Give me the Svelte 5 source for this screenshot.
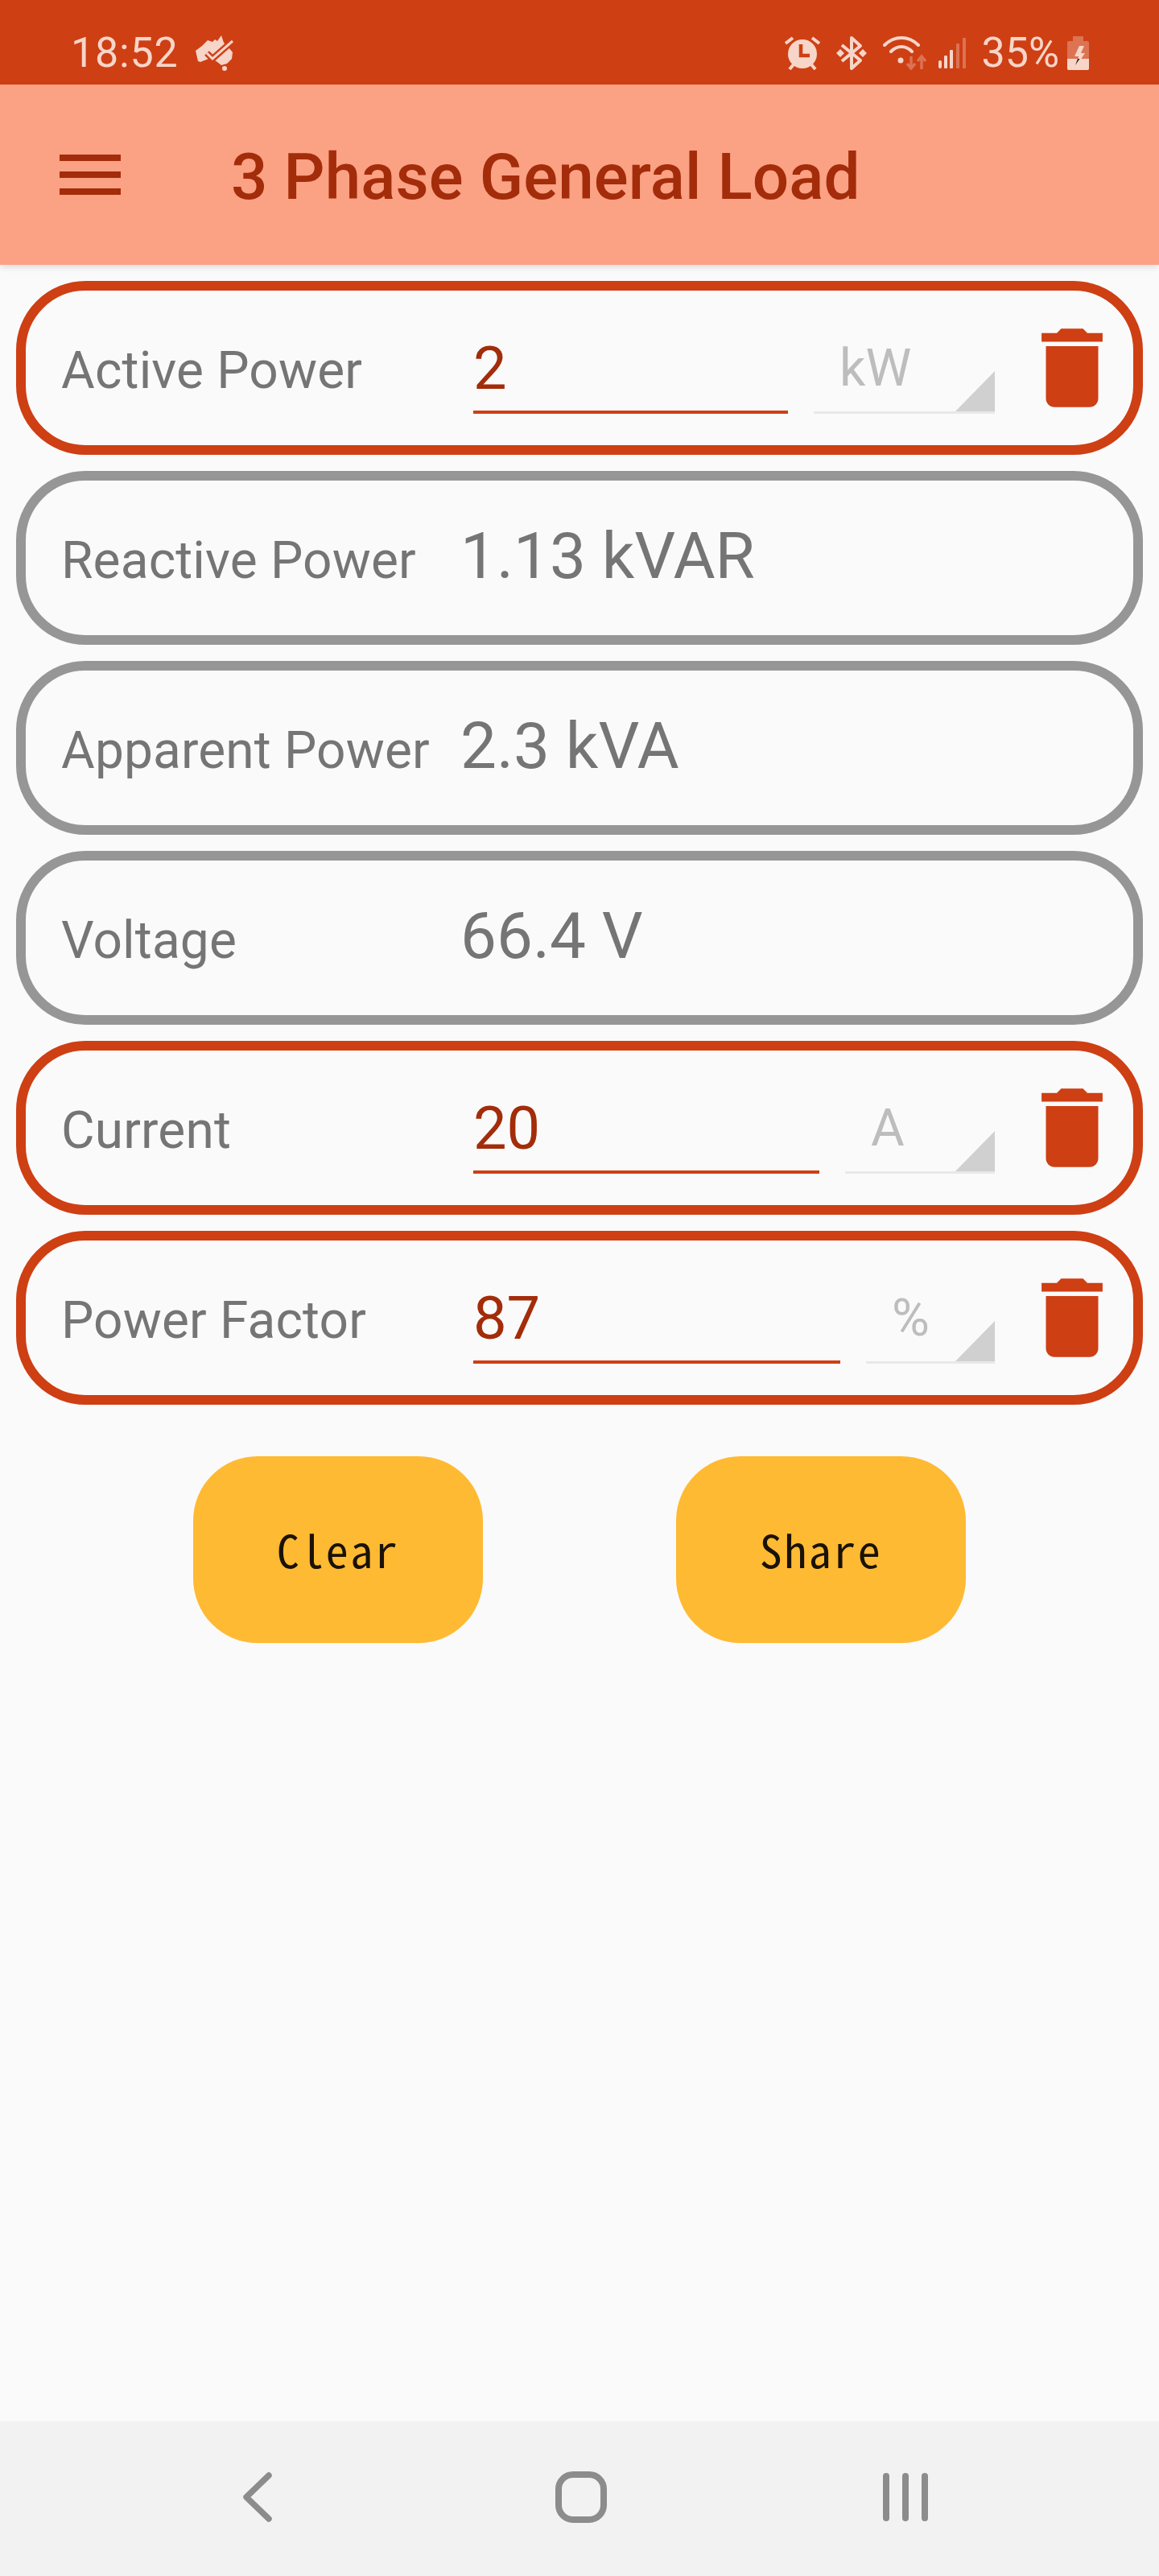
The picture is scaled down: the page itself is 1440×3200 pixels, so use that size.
<script lang="ts">
  type Row =
    | { label: string; output: string }
    | { label: string; value: string; unit: string; unit_width: number };

  const rows: Row[] = [
    { label: "Active Power", value: "2", unit: "kW", unit_width: 225 },
    { label: "Reactive Power", output: "1.13 kVAR" },
    { label: "Apparent Power", output: "2.3 kVA" },
    { label: "Voltage", output: "66.4 V" },
    { label: "Current", value: "20", unit: "A", unit_width: 186 },
    { label: "Power Factor", value: "87", unit: "%", unit_width: 160 },
  ];
</script>

<div class="Screen">
  <div class="StatusBar">
    <span class="StatusBar__time">18:52</span>
    <svg class="StatusBar__aus" width="49" height="44" viewBox="0 0 49 44">
      <path d="M1 19 L9 13 L16 6 L22 8 L25 5 L28 7 L33 0 L36 9 L42 15 L47 21 L46 29 L40 35 L33 37 L28 33 L20 28 L7 33 L4 32 Z" fill="currentColor" />
      <circle cx="37" cy="41" r="3" fill="currentColor" />
      <path d="M15 22 L22 29 L47 7" fill="none" stroke="#ce3f14" stroke-width="8" />
      <path d="M15 22 L22 29 L47 7" fill="none" stroke="currentColor" stroke-width="3" />
    </svg>
    <span class="StatusBar__spacer"></span>
    <svg class="StatusBar__alarm" width="44" height="42" viewBox="0 0 44 42">
      <circle cx="22" cy="22" r="18" fill="currentColor" />
      <path d="M1 9 L10 2 M43 9 L34 2 M6 41 L11 35 M38 41 L33 35" stroke="currentColor" stroke-width="4" fill="none" />
      <path d="M20 10 V24 H31" stroke="#ce3f14" stroke-width="4.5" fill="none" />
    </svg>
    <svg class="StatusBar__bt" width="38" height="44" viewBox="0 0 38 44">
      <path d="M7 12 L30 31 L19 41 V3 L30 13 L7 32" fill="none" stroke="currentColor" stroke-width="4" stroke-linejoin="round" />
      <path d="M0 22 L5 17 L10 22 L5 27 Z M28 22 L33 17 L38 22 L33 27 Z" fill="currentColor" />
    </svg>
    <svg class="StatusBar__wifi" width="54" height="42" viewBox="0 0 54 42">
      <path d="M2 11 C14 -1 32 -1 44 11 M10 19 C18 11 28 11 36 19" fill="none" stroke="currentColor" stroke-width="4" stroke-linecap="round" />
      <circle cx="22" cy="30" r="3.5" fill="currentColor" />
      <path d="M35 25 V39 M30 34 L35 40 L40 34 M48 41 V26 M43 31 L48 25 L53 31" fill="none" stroke="currentColor" stroke-width="3.5" opacity="0.35" />
    </svg>
    <svg class="StatusBar__signal" width="36" height="38" viewBox="0 0 36 38">
      <rect x="1" y="28" width="4" height="10" rx="2" fill="currentColor" />
      <rect x="8" y="22" width="4" height="16" rx="1" fill="currentColor" />
      <rect x="15" y="15" width="4" height="23" rx="1" fill="currentColor" />
      <rect x="23" y="7" width="4" height="31" rx="1" fill="currentColor" opacity="0.35" />
      <rect x="31" y="0" width="4" height="38" rx="1" fill="currentColor" opacity="0.35" />
    </svg>
    <span class="StatusBar__percent">35%</span>
    <svg class="StatusBar__battery" width="27" height="42" viewBox="0 0 27 42">
      <path d="M7 0 H20 V6 H25 Q27 6 27 8 V40 Q27 42 25 42 H2 Q0 42 0 40 V8 Q0 6 2 6 H7 Z" fill="currentColor" opacity="0.35" />
      <path d="M0 28 H27 V40 Q27 42 25 42 H2 Q0 42 0 40 Z" fill="currentColor" />
      <path d="M15 12 H21 L17 21 H22 L12 36 L14 25 H9 Z" fill="currentColor" />
      <path d="M10 36 L13 28 H15.5 Z" fill="#2a1a14" />
    </svg>
  </div>

  <header class="AppBar">
    <svg class="AppBar__menu" width="76" height="50" viewBox="0 0 76 50" aria-label="Menu">
      <rect width="76" height="8" />
      <rect y="21" width="76" height="8" />
      <rect y="42" width="76" height="8" />
    </svg>
    <h1 class="AppBar__title">3 Phase General Load</h1>
  </header>

  <main class="Content">
    {#each rows as row}
      {#if "output" in row}
        <div class="Row Row--output">
          <span class="Row__label">{row.label}</span>
          <span class="Row__output">{row.output}</span>
        </div>
      {:else}
        <div class="Row">
          <span class="Row__label">{row.label}</span>
          <span class="Row__input">{row.value}</span>
          <span class="Row__unit" style="width: {row.unit_width}px">
            {row.unit}
            <span class="Row__caret"></span>
          </span>
          <svg class="Row__trash" width="130" height="130" viewBox="0 0 24 24" aria-label="Delete">
            <path d="M6 19c0 1.1.9 2 2 2h8c1.1 0 2-.9 2-2V7H6v12zM19 4h-3.5l-1-1h-5l-1 1H5v2h14V4z" />
          </svg>
        </div>
      {/if}
    {/each}

    <div class="Actions">
      <button type="button" class="Actions__button">Clear</button>
      <button type="button" class="Actions__button">Share</button>
    </div>
  </main>

  <nav class="NavBar">
    <svg class="NavBar__back" width="38" height="62" viewBox="0 0 38 62">
      <path d="M33 4 L5 31 L33 58" fill="none" stroke="#8c8c8c" stroke-width="7.5" stroke-linecap="round" stroke-linejoin="round" />
    </svg>
    <span class="NavBar__home"></span>
    <span class="NavBar__recents">
      <span></span>
      <span></span>
      <span></span>
    </span>
  </nav>
</div>

<style>
  :global(body) {
    margin: 0;
    background-color: #fafafa;
  }

  .Screen {
    display: flex;
    flex-direction: column;
    height: 3200px;
    background-color: #fafafa;
    font-family: Roboto, sans-serif;
  }

  .StatusBar {
    display: flex;
    align-items: center;
    flex: none;
    box-sizing: border-box;
    height: 105px;
    padding: 26px 87px 0 88px;
    background-color: #ce3f14;
    color: #f7d5c9;
  }

  .StatusBar__time {
    font-size: 52px;
    line-height: 80px;
    letter-spacing: 0.8px;
  }

  .StatusBar__aus {
    margin-left: 20px;
  }

  .StatusBar__spacer {
    flex: 1;
  }

  .StatusBar__bt {
    margin-left: 20px;
  }

  .StatusBar__wifi {
    margin-left: 20px;
  }

  .StatusBar__signal {
    margin-left: 14px;
  }

  .StatusBar__percent {
    margin-left: 18px;
    font-size: 52px;
    line-height: 80px;
  }

  .StatusBar__battery {
    margin-left: 10px;
  }

  .AppBar {
    display: flex;
    align-items: center;
    flex: none;
    box-sizing: border-box;
    height: 224px;
    padding-left: 74px;
    background-color: #fba184;
    box-shadow: 0 3px 8px rgba(0, 0, 0, 0.12);
    z-index: 1;
  }

  .AppBar__menu {
    fill: #a32c0a;
  }

  .AppBar__title {
    margin: 6px 0 0 137px;
    color: #a32c0a;
    font-size: 80px;
    font-weight: 500;
    line-height: 1;
    letter-spacing: 0.1px;
  }

  .Content {
    display: flex;
    flex: 1;
    flex-direction: column;
    gap: 20px;
    padding: 20px 20px 0;
  }

  .Row {
    display: flex;
    align-items: center;
    box-sizing: border-box;
    height: 216px;
    padding: 0 11px 0 44px;
    border: 12px solid #ce3f14;
    border-radius: 86px;
  }

  .Row--output {
    border-color: #969696;
  }

  .Row__label {
    flex: none;
    width: 512px;
    padding-top: 6px;
    color: #757575;
    font-size: 64px;
    letter-spacing: 0.15px;
    white-space: nowrap;
  }

  .Row--output .Row__label {
    width: 496px;
  }

  .Row__input {
    flex: 1;
    box-sizing: border-box;
    height: 114px;
    border-bottom: 4px solid #ce3f14;
    color: #a32c0a;
    font-size: 74px;
    line-height: 116px;
  }

  .Row__output {
    margin-top: -4px;
    color: #757575;
    font-size: 80px;
  }

  .Row__unit {
    position: relative;
    flex: none;
    box-sizing: border-box;
    height: 114px;
    margin-left: 32px;
    padding: 16px 0 0 32px;
    border-bottom: 3px solid #e8e8e8;
    color: #bdbdbd;
    font-size: 64px;
    line-height: 84px;
  }

  .Row__caret {
    position: absolute;
    right: 0;
    bottom: 0;
    width: 49px;
    height: 50px;
    background-color: #d0d0d0;
    clip-path: polygon(100% 0, 100% 100%, 0 100%);
  }

  .Row__trash {
    flex: none;
    margin-left: 31px;
    fill: #ce3f14;
  }

  .Actions {
    display: flex;
    justify-content: center;
    gap: 240px;
    margin-top: 44px;
  }

  .Actions__button {
    width: 360px;
    height: 232px;
    padding: 0 0 4px;
    border: none;
    border-radius: 80px;
    background-color: #ffba33;
    color: #1a1206;
    font-family: "Noto Sans Mono CJK JP", "Noto Sans CJK JP", monospace;
    font-size: 56px;
    font-weight: 500;
    letter-spacing: 2.5px;
  }

  .NavBar {
    display: flex;
    align-items: center;
    flex: none;
    box-sizing: border-box;
    height: 192px;
    padding: 0 0 4px 301px;
    background-color: #f2f2f2;
  }

  .NavBar__home {
    box-sizing: border-box;
    width: 64px;
    height: 64px;
    margin-left: 351px;
    border: 8px solid #8c8c8c;
    border-radius: 22px;
  }

  .NavBar__recents {
    display: flex;
    gap: 16px;
    margin-left: 343px;
  }

  .NavBar__recents span {
    width: 8px;
    height: 60px;
    border-radius: 4px;
    background-color: #8c8c8c;
  }
</style>
